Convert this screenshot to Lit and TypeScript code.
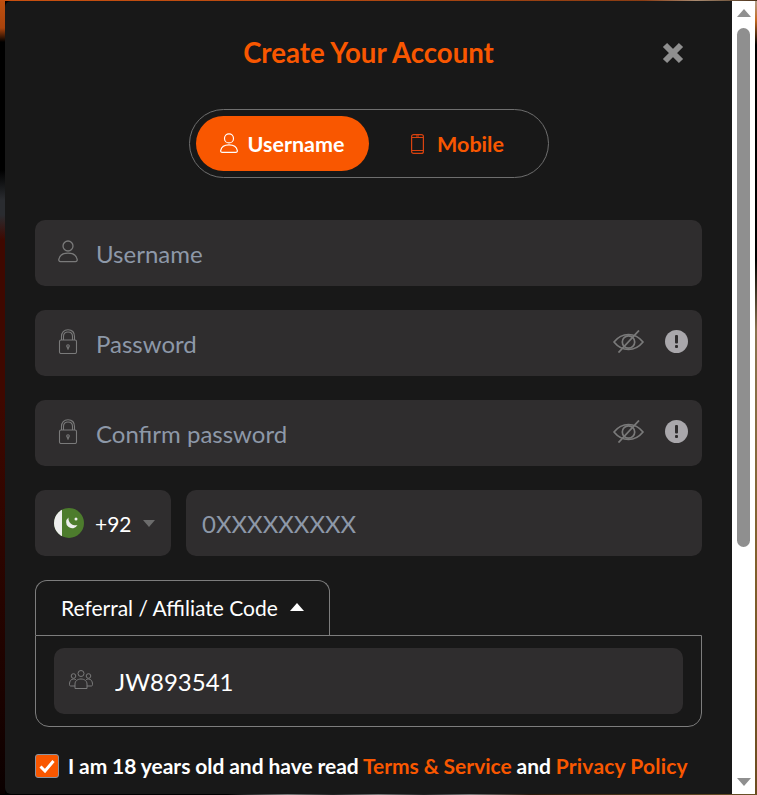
import { css, html, LitElement, svg } from 'lit';
import { customElement } from 'lit/decorators.js';

const userIcon = (width: number) => html`
    <svg width=${width} height=${width * 1.12} viewBox="0 0 20 22.400" fill="none" stroke="currentColor" stroke-width="1.300">
        <circle cx="10" cy="6" r="5" />
        <path d="M2.500 21.600c-1.300 0-1.900-1-1.700-2.200.7-3.800 4-6.200 9.200-6.200s8.500 2.400 9.200 6.200c.2 1.200-.4 2.200-1.700 2.200z" />
    </svg>
`;

const lockIcon = html`
    <svg width="20" height="25" viewBox="0 0 20 25" fill="none" stroke="currentColor" stroke-width="1.100">
        <path d="M3.500 11V7.500C3.500 3.500 6 .8 10 .8s6.500 2.700 6.500 6.700V11" />
        <path d="M5.500 11V7.500C5.500 4.800 7.200 3 10 3s4.500 1.800 4.500 4.500V11" />
        <rect x="1.500" y="11" width="17" height="13.500" rx="1.500" />
        <path d="M10 20.500v-2.500" stroke-width="1.600" />
        <circle cx="10" cy="17" r="1.300" />
    </svg>
`;

const eyeSlash = html`
    <svg width="31" height="23" viewBox="0 0 31 23" fill="none" stroke="currentColor" stroke-width="1.700">
        <path d="M1 12C5 7 10 4.500 15.500 4.500S26 7 30 12c-4 5-9 7.500-14.500 7.500S5 17 1 12z" />
        <circle cx="15.500" cy="12" r="6.200" />
        <path d="M5.500 22.500 26 .5" stroke-width="1.800" />
    </svg>
`;

const infoIcon = html`
    <svg width="23" height="23" viewBox="0 0 23 23">
        <circle cx="11.500" cy="11.500" r="11.500" fill="#a9a7ab" />
        <rect x="10" y="5" width="3" height="8.500" rx="1" fill="#2f2d2e" />
        <rect x="10" y="15" width="3" height="3" rx="1" fill="#2f2d2e" />
    </svg>
`;

const groupIcon = html`
    <svg width="24" height="19" viewBox="0 0 24 19" fill="none" stroke="currentColor" stroke-width="1">
        <circle cx="12" cy="3.500" r="3" />
        <circle cx="4.500" cy="6" r="2.300" />
        <circle cx="19.500" cy="6" r="2.300" />
        <path d="M6 18.500v-4.500c0-3 2.500-5 6-5s6 2 6 5v4.500z" />
        <path d="M6 16H1.500C.6 16 .5 15 .5 14c0-3 1.700-5 4-5 1 0 1.700.2 2.400.8" />
        <path d="M18 16h4.500c.9 0 1-1 1-2 0-3-1.700-5-4-5-1 0-1.700.2-2.400.8" />
    </svg>
`;

const flag = svg`
    <clipPath id="flag-clip"><circle cx="15" cy="15" r="15" /></clipPath>
    <g clip-path="url(#flag-clip)">
        <rect width="30" height="30" fill="#4d7c2d" />
        <rect width="8" height="30" fill="#eeeeee" />
    </g>
    <path d="M14.500 9.500a6 6 0 1 0 9 7.500 7 7 0 0 1-9-7.500z" fill="#eeeeee" />
    <circle cx="22" cy="11" r="1.500" fill="#eeeeee" />
`;

@customElement('app-root')
export class AppRoot extends LitElement {
    static styles = css`
        :host {
            display: flex;
            height: 795px;
            box-sizing: border-box;
            padding: 1px 2px 1px 5px;
            overflow: hidden;
            background-color: #000;
            background-repeat: no-repeat;
            background-image:
                linear-gradient(to right, #c9500f 0, #b84a10 40%, #8a3c12 85%, #a88a70 92%, #4a3018 100%),
                linear-gradient(to right, #000 0, #000 30%, #777 38%, #222 44%, #777 50%, #222 56%, #777 62%, #2a1a0c 70%, #6b5228 100%),
                linear-gradient(to bottom, #c0500f 0, #a8430c 28px, #000 42px, #000 170px, #2a2c30 200px, #2a2c30 215px, #3f0800 240px, #3f0800 400px, #1a0200 700px, #0a0000 100%),
                linear-gradient(to bottom, #b0a090 0, #c46a20 20px, #000 45px, #000 260px, #8a7450 330px, #80602c 560px, #6b4c20 795px);
            background-size: 100% 1px, 100% 1px, 5px 100%, 2px 100%;
            background-position: top, bottom, left, right;
            font-family: 'Lato', 'Noto Sans', sans-serif;
        }

        .modal {
            flex: 1;
            min-width: 0;
            box-sizing: border-box;
            background: #181818;
            border-radius: 6px 0 0 6px;
            padding: 0 30px;
        }

        .head {
            display: grid;
            grid-template-columns: 1fr auto 1fr;
            align-items: center;
            padding-top: 33px;
            height: 38px;
        }

        h1 {
            grid-column: 2;
            margin: 0;
            font-size: 27.600px;
            line-height: 38px;
            font-weight: 700;
            color: #f95700;
        }

        .close {
            justify-self: end;
            margin-right: 17px;
            display: flex;
            color: #8f8f8f;
        }

        .tabs {
            display: flex;
            box-sizing: border-box;
            width: 360px;
            height: 69px;
            margin: 37px auto 42px;
            padding: 6px;
            border: 1px solid #6e6e6e;
            border-radius: 35px;
        }

        .tab {
            display: flex;
            align-items: center;
            justify-content: center;
            gap: 10px;
            width: 173px;
            border-radius: 28px;
            font-size: 21.500px;
            font-weight: 700;
            color: #f95700;
        }

        .tab.active {
            background: #f95700;
            color: #fff;
        }

        .tab svg {
            flex: none;
        }

        .phone-icon {
            color: #d9420f;
            margin-left: 5px;
            margin-right: 3px;
        }

        .fields {
            display: flex;
            flex-direction: column;
            gap: 24px;
        }

        .field {
            display: flex;
            align-items: center;
            box-sizing: border-box;
            height: 66px;
            padding: 0 14px 0 23px;
            background: #2f2d2e;
            border-radius: 10px;
            color: #7a7a7a;
        }

        .field > svg {
            flex: none;
        }

        .lead {
            display: flex;
            justify-content: center;
            width: 20px;
            margin-right: 18px;
            margin-top: -3px;
        }

        input {
            flex: 1;
            min-width: 0;
            padding: 0;
            margin: 0;
            border: 0;
            outline: 0;
            background: transparent;
            font: 400 24px 'Lato', sans-serif;
            color: #fff;
        }

        input::placeholder {
            color: #8d98a8;
            opacity: 1;
        }

        .eye {
            display: flex;
            margin: -3px 21px 0 0;
        }

        .info {
            display: flex;
            margin-top: -3px;
        }

        .phone {
            display: flex;
            gap: 15px;
        }

        .code {
            flex: none;
            width: 136px;
            padding: 0 16px 0 19px;
            color: #fff;
            font-size: 21px;
        }

        .flag {
            flex: none;
            margin-right: 11px;
        }

        .caret {
            flex: none;
            width: 0;
            height: 0;
            margin-left: 11px;
            border: 6px solid transparent;
            border-top: 7px solid #6c6c6c;
            border-bottom: 0;
        }

        .number {
            flex: 1;
            padding-left: 16px;
        }

        .referral-tab {
            display: flex;
            align-items: center;
            box-sizing: border-box;
            width: 295px;
            height: 55px;
            padding: 0 0 2px 25px;
            border: 1px solid #7d7d7d;
            border-bottom: 0;
            border-radius: 12px 12px 0 0;
            font-size: 21px;
            color: #fff;
        }

        .up {
            width: 0;
            height: 0;
            margin-left: 12px;
            border: 7px solid transparent;
            border-bottom: 8px solid #fff;
            border-top: 0;
        }

        .referral-panel {
            padding: 12px 18px;
            border: 1px solid #7d7d7d;
            border-radius: 0 0 14px 14px;
        }

        .referral-panel .field {
            padding-left: 15px;
        }

        .referral-panel .lead {
            width: 24px;
            margin-right: 22px;
        }

        .agree {
            display: flex;
            align-items: center;
            gap: 9px;
            margin-top: 27px;
            font-size: 21px;
            font-weight: 700;
            word-spacing: -0.3px;
            color: #fff;
            white-space: nowrap;
        }

        .agree span:last-child {
            margin-top: -2px;
        }

        .agree a {
            color: #f95700;
        }

        .agree a.policy {
            letter-spacing: 0.2px;
        }

        .box {
            display: flex;
            align-items: center;
            justify-content: center;
            flex: none;
            box-sizing: border-box;
            width: 24px;
            height: 24px;
            background: #f95700;
            border: 1px solid #8a93a0;
            border-radius: 3px;
        }

        .scrollbar {
            flex: none;
            display: flex;
            flex-direction: column;
            align-items: center;
            box-sizing: border-box;
            width: 23px;
            padding: 8px 0;
            background: #fff;
        }

        .arrow {
            width: 0;
            height: 0;
            border-left: 7.500px solid transparent;
            border-right: 7.500px solid transparent;
            border-bottom: 8px solid #8f8f8f;
        }

        .arrow.down {
            margin-top: auto;
            border-bottom: 0;
            border-top: 8px solid #8f8f8f;
        }

        .thumb {
            width: 13px;
            height: 519px;
            margin-top: 11px;
            background: #8f8f8f;
            border-radius: 7px;
        }
    `;

    passwordField(placeholder: string) {
        return html`
            <div class="field">
                <span class="lead">${lockIcon}</span>
                <input type="password" placeholder=${placeholder} />
                <span class="eye">${eyeSlash}</span>
                <span class="info">${infoIcon}</span>
            </div>
        `;
    }

    render() {
        return html`
            <div class="modal">
                <div class="head">
                    <h1>Create Your Account</h1>
                    <span class="close">
                        <svg width="24" height="24" viewBox="0 0 24 24">
                            <path d="M4 4 20 20M20 4 4 20" stroke="currentColor" stroke-width="6" />
                        </svg>
                    </span>
                </div>

                <div class="tabs">
                    <div class="tab active">${userIcon(18)}<span>Username</span></div>
                    <div class="tab">
                        <svg class="phone-icon" width="13" height="20" viewBox="0 0 13 20" fill="none" stroke="currentColor" stroke-width="1.200">
                            <rect x=".6" y=".6" width="11.800" height="18.800" rx="2" />
                            <path d="M.6 3.500h11.800M.6 16.500h11.800M5 2h3" />
                        </svg>
                        <span>Mobile</span>
                    </div>
                </div>

                <div class="fields">
                    <div class="field">
                        <span class="lead">${userIcon(20)}</span>
                        <input type="text" placeholder="Username" />
                    </div>
                    ${this.passwordField('Password')}
                    ${this.passwordField('Confirm password')}

                    <div class="phone">
                        <div class="field code">
                            <svg class="flag" width="30" height="30" viewBox="0 0 30 30">${flag}</svg>
                            <span>+92</span>
                            <span class="caret"></span>
                        </div>
                        <div class="field number">
                            <input type="text" placeholder="0XXXXXXXXX" />
                        </div>
                    </div>

                    <div>
                        <div class="referral-tab">
                            <span>Referral / Affiliate Code</span>
                            <span class="up"></span>
                        </div>
                        <div class="referral-panel">
                            <div class="field">
                                <span class="lead">${groupIcon}</span>
                                <input type="text" value="JW893541" />
                            </div>
                        </div>
                    </div>
                </div>

                <div class="agree">
                    <span class="box">
                        <svg width="16" height="14" viewBox="0 0 16 14" fill="none" stroke="#fff" stroke-width="3">
                            <path d="M1.500 7.500 6 12 14.500 2" />
                        </svg>
                    </span>
                    <span>I am 18 years old and have read <a>Terms &amp; Service</a> and <a class="policy">Privacy Policy</a></span>
                </div>
            </div>

            <div class="scrollbar">
                <span class="arrow"></span>
                <span class="thumb"></span>
                <span class="arrow down"></span>
            </div>
        `;
    }
}
